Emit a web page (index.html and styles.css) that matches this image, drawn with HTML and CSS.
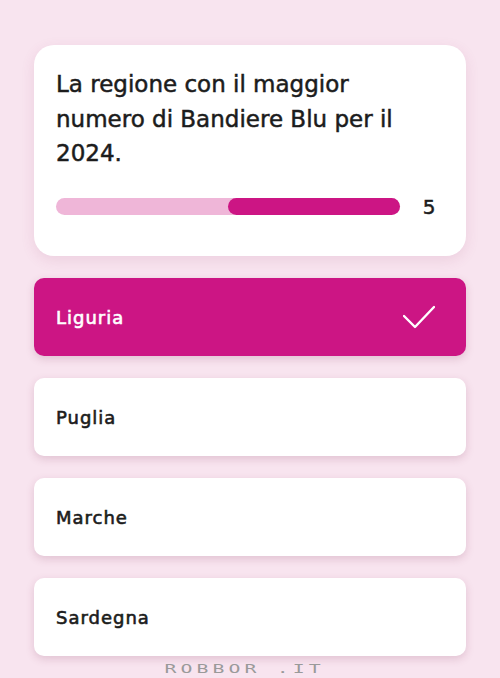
FILE: index.html
```html
<!DOCTYPE html>
<html lang="it">
<head>
    <meta charset="UTF-8">
    <meta name="viewport" content="width=device-width, initial-scale=1.0">
    <title>Quiz - Bandiere Blu</title>
    <link rel="stylesheet" href="styles.css">
</head>
<body>
    <div class="quiz">
        <div class="question-card">
            <p class="question">La regione con il maggior numero di Bandiere Blu per il 2024.</p>
            <div class="timer">
                <div class="timer-bar"><div class="timer-fill" style="width: 50%"></div></div>
                <span class="timer-count">5</span>
            </div>
        </div>

        <div class="answer selected">
            <span>Liguria</span>
            <svg class="check" width="32" height="24" viewBox="0 0 32 24">
                <polyline points="1,11 12,22 31,2" fill="none" stroke="#fff" stroke-width="2.4" stroke-linecap="round" stroke-linejoin="round"/>
            </svg>
        </div>
        <div class="answer"><span>Puglia</span></div>
        <div class="answer"><span>Marche</span></div>
        <div class="answer"><span>Sardegna</span></div>

        <div class="watermark"><span>ROBBOR .IT</span></div>
    </div>
</body>
</html>
```

FILE: styles.css
```css
* {
    margin: 0;
    padding: 0;
    box-sizing: border-box;
}

body {
    background: #f8e4ef;
    font-family: 'DejaVu Sans', 'Noto Sans', sans-serif;
    color: #1c1c1c;
    min-height: 100vh;
    overflow: hidden;
}

.quiz {
    padding: 45px 34px 0;
    display: flex;
    flex-direction: column;
    gap: 22px;
}

.question-card {
    background: #fff;
    border-radius: 20px;
    padding: 22px 22px 38px;
    height: 211px;
    box-shadow: 0 4px 14px rgba(160, 60, 110, 0.12);
}

.question {
    font-size: 23px;
    line-height: 34.5px;
    -webkit-text-stroke: 0.5px #1c1c1c;
}

.timer {
    display: flex;
    align-items: center;
    gap: 14px;
    margin-top: 24px;
}

.timer-bar {
    flex: 1;
    height: 17px;
    border-radius: 9px;
    background: #efb6d8;
    display: flex;
    justify-content: flex-end;
}

.timer-fill {
    height: 100%;
    border-radius: 9px;
    background: #cc1584;
}

.timer-count {
    width: 30px;
    text-align: center;
    font-size: 20px;
    -webkit-text-stroke: 0.5px #1c1c1c;
}

.answer {
    height: 78px;
    background: #fff;
    border-radius: 10px;
    padding: 0 31px 0 22px;
    display: flex;
    align-items: center;
    justify-content: space-between;
    font-size: 18px;
    letter-spacing: 1px;
    -webkit-text-stroke: 0.6px #1c1c1c;
    box-shadow: 0 3px 8px rgba(120, 40, 80, 0.18);
}

.answer.selected {
    background: #cc1584;
    color: #fff;
    -webkit-text-stroke: 0.6px #fff;
}

.watermark {
    margin-top: -15px;
    padding-right: 10px;
    text-align: center;
    font-family: 'DejaVu Sans Mono', monospace;
    font-size: 12px;
    line-height: 12px;
    letter-spacing: 2.5px;
    color: #9a9a9a;
}

.watermark span {
    display: inline-block;
    transform: scaleX(1.65);
}
```
